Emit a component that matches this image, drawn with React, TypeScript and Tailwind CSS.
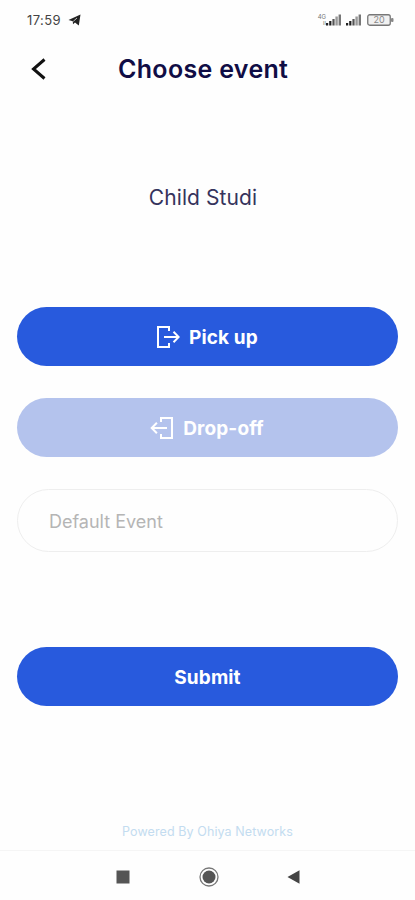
import type { ReactNode } from 'react'
import clsx from 'clsx'

function SignalBars({ className }: { className?: string }) {
  return (
    <svg width="15" height="12" viewBox="0 0 15 12" className={className} aria-hidden>
      <rect x="0" y="9" width="2.2" height="2.5" fill="#222" />
      <rect x="3.2" y="7" width="2.2" height="4.5" fill="#222" />
      <rect x="6.4" y="5" width="2.2" height="6.5" fill="#555" />
      <rect x="9.4" y="2.5" width="2.4" height="9" fill="#999" />
      <rect x="12.6" y="0.5" width="2.4" height="11" fill="#777" />
    </svg>
  )
}

function StatusBar() {
  return (
    <div className="flex h-10 items-center pl-[27px] pr-[21px]">
      <span className="w-[34px] text-[13px] leading-none tracking-[0.4px] text-[#444]">17:59</span>
      <svg width="13" height="12" viewBox="0 0 13 12" className="ml-[7px]" aria-hidden>
        <path d="M12.5 0.5 10.8 11.5 7 8.4 5 10.2 4.8 7.2 0.5 6Z" fill="#222" />
        <path d="M5.2 7.4 9 4" stroke="#fff" strokeWidth="0.7" />
      </svg>
      <div className="ml-auto flex items-center">
        <div className="flex w-[7px] flex-col items-end text-[6px] leading-[6px] text-[#777]">
          <span>4G</span>
          <span>ıı</span>
        </div>
        <SignalBars />
        <SignalBars className="ml-[5px]" />
        <svg width="27" height="12" viewBox="0 0 27 12" className="ml-1.5" aria-hidden>
          <rect x="0.75" y="0.75" width="22.5" height="10.5" rx="2" fill="#f1f1f1" stroke="#777" strokeWidth="1.3" />
          <rect x="24" y="4" width="2.5" height="4" rx="1" fill="#888" />
          <text x="12" y="9.2" textAnchor="middle" fontSize="9" fill="#888">
            20
          </text>
        </svg>
      </div>
    </div>
  )
}

function PickUpIcon() {
  return (
    <svg width="24" height="24" viewBox="0 0 24 24" fill="none" stroke="currentColor" strokeWidth="2" aria-hidden>
      <path d="M13 6V2H2V22H13V18" />
      <path d="M8 12H22.5M17.5 6.8 22.7 12 17.5 17.2" />
    </svg>
  )
}

function DropOffIcon() {
  return (
    <svg width="24" height="24" viewBox="0 0 24 24" fill="none" stroke="currentColor" strokeWidth="2" aria-hidden>
      <path d="M11 6V2H22V22H11V18" />
      <path d="M17 12H2M6.9 6.8 1.7 12 6.9 17.2" />
    </svg>
  )
}

interface PillButtonProps {
  children: ReactNode
  icon?: ReactNode
  disabled?: boolean
  className?: string
}

function PillButton({ children, icon, disabled, className }: PillButtonProps) {
  return (
    <button
      type="button"
      disabled={disabled}
      className={clsx(
        'flex h-[59px] w-full shrink-0 items-center justify-center gap-[9px] rounded-full text-[19px] font-bold tracking-[0.12px] text-white',
        disabled ? 'bg-[#b4c3ed]' : 'bg-[#285add]',
        className,
      )}
    >
      {icon}
      <span className="pt-[3px]">{children}</span>
    </button>
  )
}

export default function App() {
  return (
    <div className="flex h-[900px] w-[415px] flex-col overflow-hidden bg-[#fefefe] font-['Inter',sans-serif]">
      <StatusBar />

      <header className="flex h-[58px] items-center">
        <button type="button" aria-label="Back" className="ml-[31px] w-4">
          <svg width="16" height="22" viewBox="0 0 16 22" fill="none" stroke="#111" strokeWidth="3" aria-hidden>
            <path d="M13.5 1.5 2.5 11 13.5 20.5" />
          </svg>
        </button>
        <h1 className="ml-[71px] whitespace-nowrap pt-0.5 text-[25px] font-semibold tracking-[0.32px] text-[#100d45]">
          Choose event
        </h1>
      </header>

      <main className="flex flex-1 flex-col px-[17px]">
        <p className="mt-[84px] h-8 pr-[9px] text-center text-[21px] leading-8 tracking-[0.1px] text-[#35335c]">
          Child Studi
        </p>

        <PillButton icon={<PickUpIcon />} className="mt-[93px] pr-px">
          Pick up
        </PillButton>
        <PillButton icon={<DropOffIcon />} className="mt-8 pr-px" disabled>
          Drop-off
        </PillButton>
        <input
          type="text"
          placeholder="Default Event"
          className="mt-8 h-[63px] w-full shrink-0 rounded-full border border-[#eeeeee] px-[31px] pt-0.5 text-[18px] placeholder:text-[#b5b5b5]"
        />
        <PillButton className="mt-[95px]">Submit</PillButton>

        <p className="mb-2 mt-auto text-center text-[12.5px] leading-5 tracking-[0.1px] text-[#c3dcf0]">
          Powered By Ohiya Networks
        </p>
      </main>

      <nav className="flex h-[50px] items-center border-t border-[#f5f5f5] pl-[116px] pt-[3px]">
        <svg width="14" height="14" aria-hidden>
          <rect x="0.5" y="0.5" width="13" height="13" fill="#555" />
        </svg>
        <svg width="20" height="20" viewBox="0 0 20 20" className="ml-[69px]" aria-hidden>
          <circle cx="10" cy="10" r="9" fill="none" stroke="#777" strokeWidth="1.3" />
          <circle cx="10" cy="10" r="6.5" fill="#555" />
        </svg>
        <svg width="13" height="14" viewBox="0 0 13 14" className="ml-[68px]" aria-hidden>
          <path d="M12.5 0.3V13.7L0.5 7Z" fill="#444" />
        </svg>
      </nav>
    </div>
  )
}
